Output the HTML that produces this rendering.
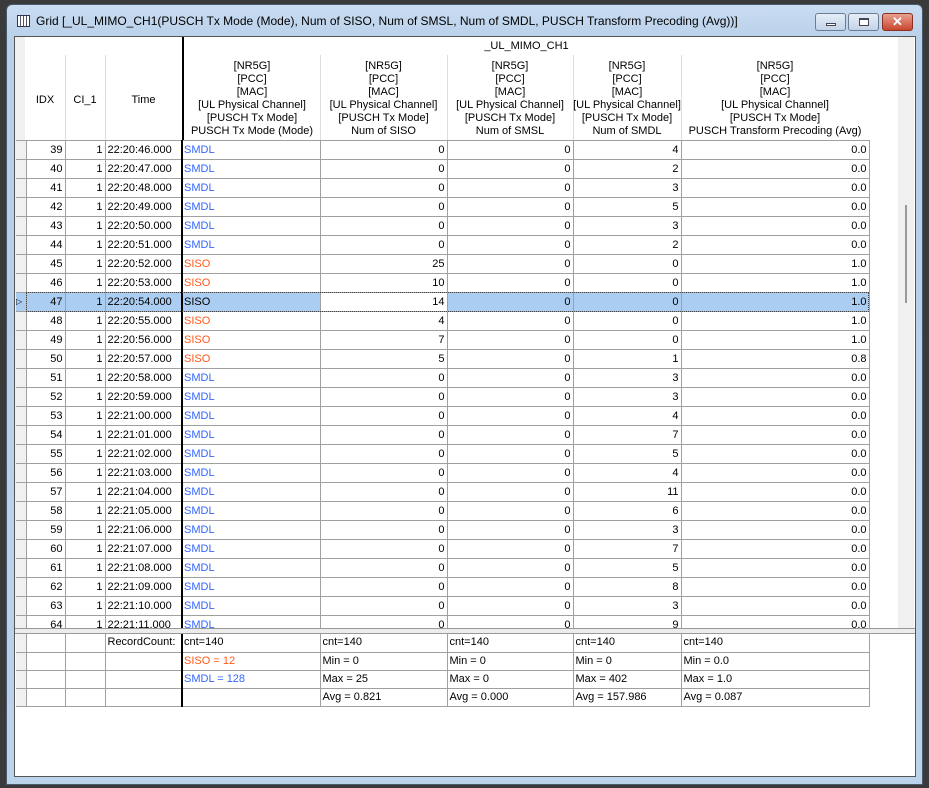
<!DOCTYPE html>
<html><head><meta charset="utf-8"><style>
*{margin:0;padding:0;box-sizing:border-box}
body{width:929px;height:788px;background:#3a3a3a;position:relative;overflow:hidden;font-family:"Liberation Sans",sans-serif;font-size:11px;color:#000}
.frame{position:absolute;left:6px;top:4px;width:917px;height:781px;background:linear-gradient(#c9dcf1,#b7cfe9 40px,#bcd3ec);border:1px solid #4a5a6a;border-radius:6px 6px 0 0}
.title{position:absolute;left:36px;top:14px;font-size:12px;color:#000}
.ticon{position:absolute;left:17px;top:15px;width:13px;height:12px;border:1px solid #335;background:repeating-linear-gradient(90deg,#fff 0 2px,#556 2px 3px),#fff}
.btn{position:absolute;top:13px;height:18px;border:1px solid #6b7d95;border-radius:3px;background:linear-gradient(#e6eef8,#c3d3e8)}
.client{position:absolute;left:14px;top:36px;width:902px;height:741px;background:#fff;border:1px solid #555}
.sb{position:absolute;left:883px;top:0;width:16px;height:592px;background:#f0f0f0}
.thumb{position:absolute;left:890px;top:168px;width:2px;height:98px;background:#9a9a9a}
table{border-collapse:collapse;table-layout:fixed;position:absolute;left:1px}
td{border-right:1px solid #a0a0a0;border-bottom:1px solid #a0a0a0;height:19px;padding:0 2px;white-space:nowrap;overflow:hidden;text-align:right;line-height:18px}
td.rh{background:#f0f0f0;border-right:1px solid #a0a0a0}
td.t{text-align:left}
td.m{border-left:2px solid #000;text-align:left;padding-left:1px}
.b{color:#3366ff}.o{color:#ff5a1a}
tr.sel td{background:#abcdf1}
tr.sel td.cur{background:#fff}
.hdr{position:absolute;top:0;height:103px;text-align:center;line-height:13px;font-size:11px}
.vl{position:absolute;top:18px;height:85px;width:1px;background:#ddd}
#foot td{height:18px;line-height:17px;text-align:left}
</style></head><body>
<div class="frame"></div>
<div class="ticon"></div>
<div class="title">Grid [_UL_MIMO_CH1(PUSCH Tx Mode (Mode), Num of SISO, Num of SMSL, Num of SMDL, PUSCH Transform Precoding (Avg))]</div>
<div class="btn" style="left:815px;width:31px"><div style="position:absolute;left:10px;top:9px;width:10px;height:3px;background:#fff;border:1px solid #445"></div></div>
<div class="btn" style="left:848px;width:31px"><div style="position:absolute;left:10px;top:4px;width:10px;height:8px;border:1px solid #445;border-top-width:2px;background:#fff"></div></div>
<div class="btn" style="left:882px;width:31px;background:linear-gradient(#e9a08f,#c8462e);border-color:#8a3020;color:#fff;font-weight:bold;font-size:13px;text-align:center;line-height:16px">✕</div>
<div class="client">
<div class="sb"></div><div class="thumb"></div>
<div style="position:absolute;left:0;top:0;width:10px;height:592px;background:#f0f0f0"></div>
<div style="position:absolute;left:167px;top:0;width:2px;height:103px;background:#000"></div>
<div class="hdr" style="left:10px;width:40px;top:18px;height:85px;line-height:90px">IDX</div>
<div class="hdr" style="left:50px;width:40px;top:18px;height:85px;line-height:90px">CI_1</div>
<div class="hdr" style="left:90px;width:77px;top:18px;height:85px;line-height:90px">Time</div>
<div class="hdr" style="left:169px;width:685px;height:14px;top:3px">_UL_MIMO_CH1</div>
<div class="vl" style="left:50px"></div><div class="vl" style="left:90px"></div><div class="vl" style="left:305px"></div><div class="vl" style="left:432px"></div><div class="vl" style="left:558px"></div><div class="vl" style="left:666px"></div>
<div class="hdr" style="left:169px;width:136px;top:23px">[NR5G]<br>[PCC]<br>[MAC]<br>[UL Physical Channel]<br>[PUSCH Tx Mode]<br>PUSCH Tx Mode (Mode)</div>
<div class="hdr" style="left:305px;width:127px;top:23px">[NR5G]<br>[PCC]<br>[MAC]<br>[UL Physical Channel]<br>[PUSCH Tx Mode]<br>Num of SISO</div>
<div class="hdr" style="left:432px;width:126px;top:23px">[NR5G]<br>[PCC]<br>[MAC]<br>[UL Physical Channel]<br>[PUSCH Tx Mode]<br>Num of SMSL</div>
<div class="hdr" style="left:558px;width:108px;top:23px">[NR5G]<br>[PCC]<br>[MAC]<br>[UL Physical Channel]<br>[PUSCH Tx Mode]<br>Num of SMDL</div>
<div class="hdr" style="left:666px;width:188px;top:23px">[NR5G]<br>[PCC]<br>[MAC]<br>[UL Physical Channel]<br>[PUSCH Tx Mode]<br>PUSCH Transform Precoding (Avg)</div>
<div style="position:absolute;left:0;top:103px;width:883px;height:489px;overflow:hidden">
<table style="top:0;left:1px;border-top:1px solid #a0a0a0">
<colgroup><col style="width:10px"><col style="width:39px"><col style="width:40px"><col style="width:77px"><col style="width:138px"><col style="width:127px"><col style="width:126px"><col style="width:108px"><col style="width:188px"></colgroup>
<tr><td class="rh"></td><td>39</td><td>1</td><td class="t">22:20:46.000</td><td class="m b">SMDL</td><td>0</td><td>0</td><td>4</td><td>0.0</td></tr>
<tr><td class="rh"></td><td>40</td><td>1</td><td class="t">22:20:47.000</td><td class="m b">SMDL</td><td>0</td><td>0</td><td>2</td><td>0.0</td></tr>
<tr><td class="rh"></td><td>41</td><td>1</td><td class="t">22:20:48.000</td><td class="m b">SMDL</td><td>0</td><td>0</td><td>3</td><td>0.0</td></tr>
<tr><td class="rh"></td><td>42</td><td>1</td><td class="t">22:20:49.000</td><td class="m b">SMDL</td><td>0</td><td>0</td><td>5</td><td>0.0</td></tr>
<tr><td class="rh"></td><td>43</td><td>1</td><td class="t">22:20:50.000</td><td class="m b">SMDL</td><td>0</td><td>0</td><td>3</td><td>0.0</td></tr>
<tr><td class="rh"></td><td>44</td><td>1</td><td class="t">22:20:51.000</td><td class="m b">SMDL</td><td>0</td><td>0</td><td>2</td><td>0.0</td></tr>
<tr><td class="rh"></td><td>45</td><td>1</td><td class="t">22:20:52.000</td><td class="m o">SISO</td><td>25</td><td>0</td><td>0</td><td>1.0</td></tr>
<tr><td class="rh"></td><td>46</td><td>1</td><td class="t">22:20:53.000</td><td class="m o">SISO</td><td>10</td><td>0</td><td>0</td><td>1.0</td></tr>
<tr class="sel"><td class="rh" style="font-size:8px;text-align:left;padding:0">▷</td><td>47</td><td>1</td><td class="t">22:20:54.000</td><td class="m">SISO</td><td class="cur">14</td><td>0</td><td>0</td><td>1.0</td></tr>
<tr><td class="rh"></td><td>48</td><td>1</td><td class="t">22:20:55.000</td><td class="m o">SISO</td><td>4</td><td>0</td><td>0</td><td>1.0</td></tr>
<tr><td class="rh"></td><td>49</td><td>1</td><td class="t">22:20:56.000</td><td class="m o">SISO</td><td>7</td><td>0</td><td>0</td><td>1.0</td></tr>
<tr><td class="rh"></td><td>50</td><td>1</td><td class="t">22:20:57.000</td><td class="m o">SISO</td><td>5</td><td>0</td><td>1</td><td>0.8</td></tr>
<tr><td class="rh"></td><td>51</td><td>1</td><td class="t">22:20:58.000</td><td class="m b">SMDL</td><td>0</td><td>0</td><td>3</td><td>0.0</td></tr>
<tr><td class="rh"></td><td>52</td><td>1</td><td class="t">22:20:59.000</td><td class="m b">SMDL</td><td>0</td><td>0</td><td>3</td><td>0.0</td></tr>
<tr><td class="rh"></td><td>53</td><td>1</td><td class="t">22:21:00.000</td><td class="m b">SMDL</td><td>0</td><td>0</td><td>4</td><td>0.0</td></tr>
<tr><td class="rh"></td><td>54</td><td>1</td><td class="t">22:21:01.000</td><td class="m b">SMDL</td><td>0</td><td>0</td><td>7</td><td>0.0</td></tr>
<tr><td class="rh"></td><td>55</td><td>1</td><td class="t">22:21:02.000</td><td class="m b">SMDL</td><td>0</td><td>0</td><td>5</td><td>0.0</td></tr>
<tr><td class="rh"></td><td>56</td><td>1</td><td class="t">22:21:03.000</td><td class="m b">SMDL</td><td>0</td><td>0</td><td>4</td><td>0.0</td></tr>
<tr><td class="rh"></td><td>57</td><td>1</td><td class="t">22:21:04.000</td><td class="m b">SMDL</td><td>0</td><td>0</td><td>11</td><td>0.0</td></tr>
<tr><td class="rh"></td><td>58</td><td>1</td><td class="t">22:21:05.000</td><td class="m b">SMDL</td><td>0</td><td>0</td><td>6</td><td>0.0</td></tr>
<tr><td class="rh"></td><td>59</td><td>1</td><td class="t">22:21:06.000</td><td class="m b">SMDL</td><td>0</td><td>0</td><td>3</td><td>0.0</td></tr>
<tr><td class="rh"></td><td>60</td><td>1</td><td class="t">22:21:07.000</td><td class="m b">SMDL</td><td>0</td><td>0</td><td>7</td><td>0.0</td></tr>
<tr><td class="rh"></td><td>61</td><td>1</td><td class="t">22:21:08.000</td><td class="m b">SMDL</td><td>0</td><td>0</td><td>5</td><td>0.0</td></tr>
<tr><td class="rh"></td><td>62</td><td>1</td><td class="t">22:21:09.000</td><td class="m b">SMDL</td><td>0</td><td>0</td><td>8</td><td>0.0</td></tr>
<tr><td class="rh"></td><td>63</td><td>1</td><td class="t">22:21:10.000</td><td class="m b">SMDL</td><td>0</td><td>0</td><td>3</td><td>0.0</td></tr>
<tr><td class="rh"></td><td>64</td><td>1</td><td class="t">22:21:11.000</td><td class="m b">SMDL</td><td>0</td><td>0</td><td>9</td><td>0.0</td></tr>
</table>
<div style="position:absolute;left:11px;top:152px;width:843px;height:20px;border:1px dotted #444"></div>
</div>
<div style="position:absolute;left:0;top:591px;width:900px;height:6px;background:#ececec;border-top:1px solid #999;border-bottom:1px solid #999"></div>
<table id="foot" style="top:597px">
<colgroup><col style="width:10px"><col style="width:39px"><col style="width:40px"><col style="width:77px"><col style="width:138px"><col style="width:127px"><col style="width:126px"><col style="width:108px"><col style="width:188px"></colgroup>
<tr><td class="rh"></td><td></td><td></td><td>RecordCount:</td><td class="m">cnt=140</td><td>cnt=140</td><td>cnt=140</td><td>cnt=140</td><td>cnt=140</td></tr>
<tr><td class="rh"></td><td></td><td></td><td></td><td class="m o">SISO = 12</td><td>Min = 0</td><td>Min = 0</td><td>Min = 0</td><td>Min = 0.0</td></tr>
<tr><td class="rh"></td><td></td><td></td><td></td><td class="m b">SMDL = 128</td><td>Max = 25</td><td>Max = 0</td><td>Max = 402</td><td>Max = 1.0</td></tr>
<tr><td class="rh"></td><td></td><td></td><td></td><td class="m"></td><td>Avg = 0.821</td><td>Avg = 0.000</td><td>Avg = 157.986</td><td>Avg = 0.087</td></tr>
</table>
</div>
</body></html>
